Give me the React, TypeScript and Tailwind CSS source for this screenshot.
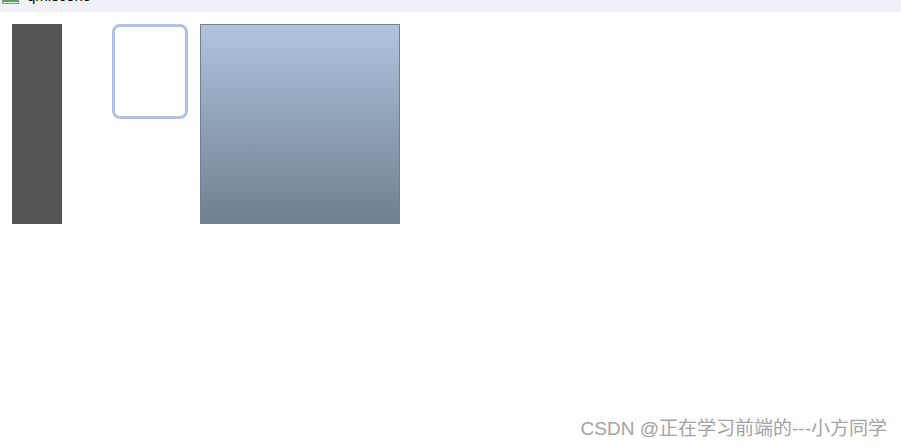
export default function App() {
  return (
    <div className="relative h-[448px] w-[901px] overflow-hidden bg-white font-['Liberation_Sans','Noto_Sans_CJK_SC',sans-serif]">
      {/* window title strip, mostly scrolled off */}
      <div className="flex h-[12px] items-start gap-[8px] overflow-hidden bg-[#f0f1f7] pl-[2px]">
        <div className="mt-[-8px] h-[12px] w-[17px] border border-[#8a9a8a] bg-[#e8efe8]">
          <div className="mt-[6px] h-[3px] w-full bg-[#5aa05a]" />
        </div>
        <span className="mt-[-13px] text-[15px] leading-[18px] text-black">qmlscene</span>
      </div>

      <div className="flex items-start pl-[12px] pt-[12px]">
        <div className="h-[200px] w-[50px] bg-[#555555]" />
        <div className="ml-[50px] h-[95px] w-[76px] rounded-[8px] border-[3px] border-[#b0c4de] bg-white" />
        <div className="ml-[12px] h-[200px] w-[200px] border border-[#708090] bg-gradient-to-b from-[#b0c4de] to-[#708090]" />
      </div>

      <div className="absolute bottom-[7px] right-[14px] text-[19px] leading-[24px] text-[#a3a3a3]">
        CSDN @正在学习前端的---小方同学
      </div>
    </div>
  );
}
